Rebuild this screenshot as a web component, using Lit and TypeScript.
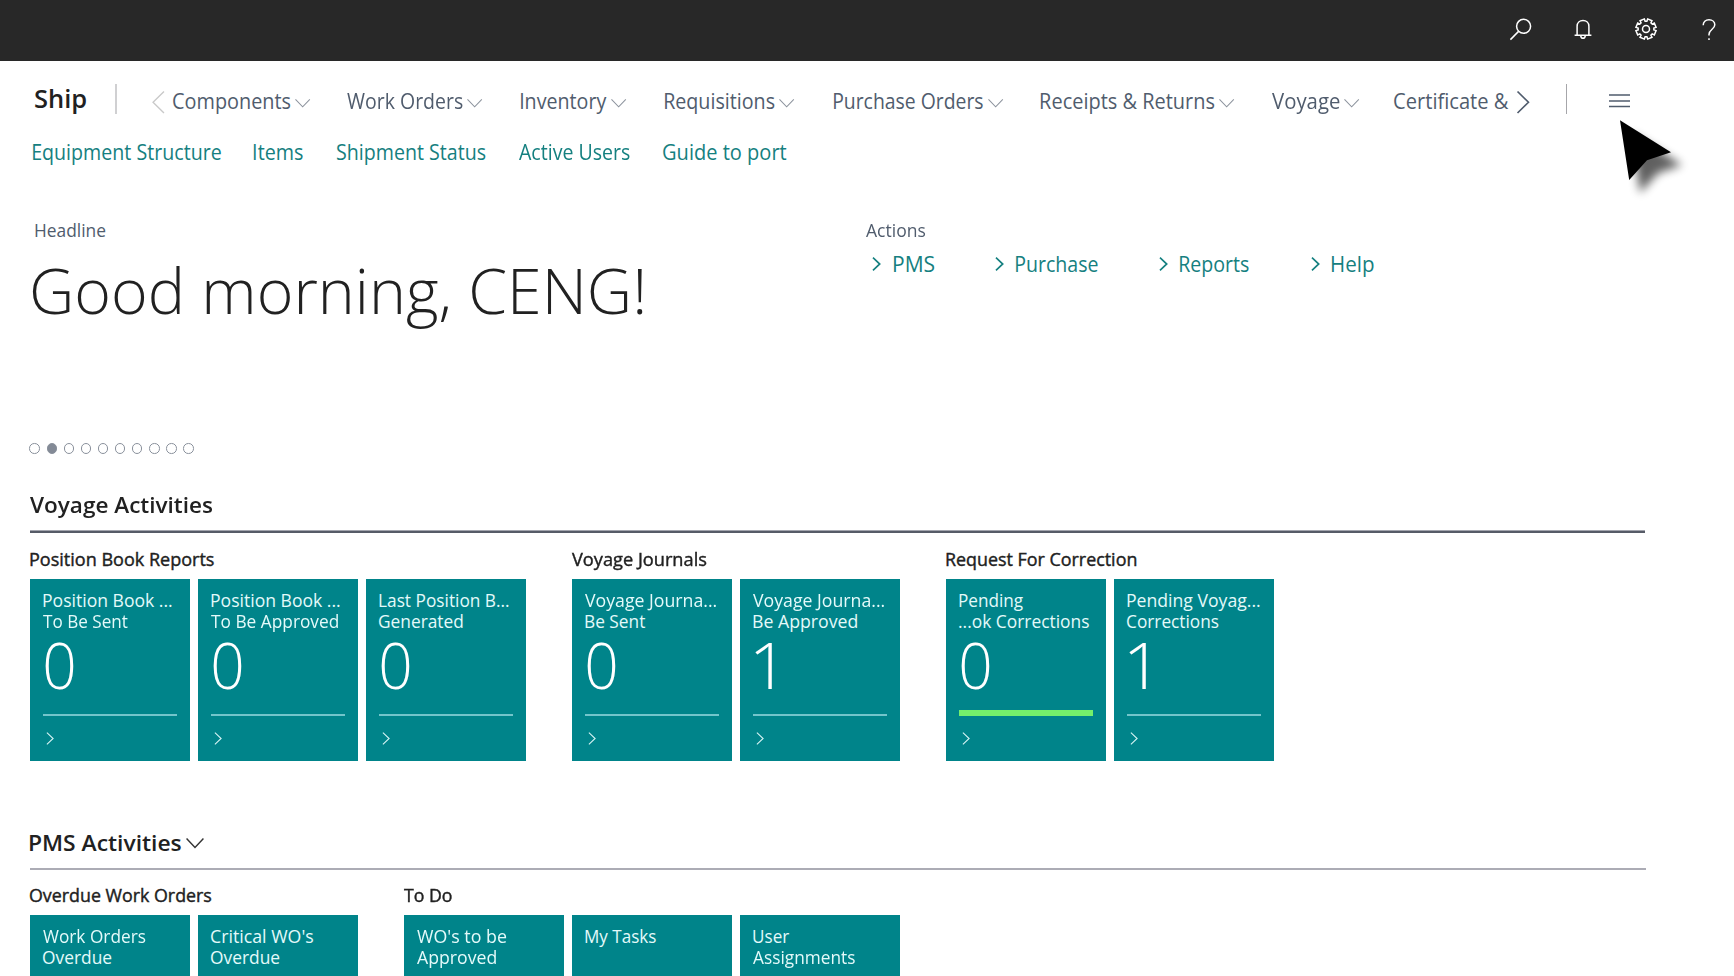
import { LitElement, html, css, svg, nothing } from "lit";
import { customElement, property, state } from "lit/decorators.js";
import { classMap } from "lit/directives/class-map.js";
import { styleMap } from "lit/directives/style-map.js";

type Line = [text: string, width: number];
interface Tile { lines: Line[]; value?: string; good?: boolean }
interface Group { title: Line; tiles: Tile[] }

/* A single line of text whose visible ink fills exactly `width` pixels. */
@customElement("ink-label")
class InkLabel extends LitElement {
  static styles = css`
    :host { display: block; flex: none; white-space: nowrap; }
    .box { display: block; }
    .ink { display: inline-block; transform-origin: 0 0; }
  `;
  @property() text = "";
  @property({ type: Number }) width = 0;
  @state() private fit = "none";

  firstUpdated() {
    const cs = getComputedStyle(this);
    const ctx = document.createElement("canvas").getContext("2d")!;
    ctx.font = `${cs.fontWeight} ${cs.fontSize} ${cs.fontFamily}`;
    const m = ctx.measureText(this.text);
    const left = -m.actualBoundingBoxLeft;
    const ink = m.actualBoundingBoxRight - left;
    this.fit = `scaleX(${this.width / ink}) translateX(${-left}px)`;
  }

  render() {
    return html`<span class="box" style=${styleMap({ width: `${this.width}px` })}
      ><span class="ink" style=${styleMap({ transform: this.fit })}>${this.text}</span></span>`;
  }
}

const label = ([text, width]: Line) => html`<ink-label .text=${text} .width=${width}></ink-label>`;

const MENU: Line[] = [
  ["Components", 118], ["Work Orders", 116.2], ["Inventory", 85.7], ["Requisitions", 110],
  ["Purchase Orders", 149.6], ["Receipts & Returns", 174], ["Voyage", 67.6], ["Certificate &", 115.1],
];
const LINKS: Line[] = [
  ["Equipment Structure", 188], ["Items", 49.4], ["Shipment Status", 149], ["Active Users", 111.4], ["Guide to port", 123.3],
];
const ACTIONS: Line[] = [["PMS", 40.6], ["Purchase", 81.7], ["Reports", 69.4], ["Help", 41.7]];

const VOYAGE: Group[] = [
  { title: ["Position Book Reports", 184], tiles: [
    { lines: [["Position Book ...", 129], ["To Be Sent", 84.6]], value: "0" },
    { lines: [["Position Book ...", 129], ["To Be Approved", 127.5]], value: "0" },
    { lines: [["Last Position B...", 130], ["Generated", 84]], value: "0" },
  ] },
  { title: ["Voyage Journals", 134.5], tiles: [
    { lines: [["Voyage Journa...", 131.6], ["Be Sent", 60]], value: "0" },
    { lines: [["Voyage Journa...", 131.6], ["Be Approved", 104.5]], value: "1" },
  ] },
  { title: ["Request For Correction", 190.5], tiles: [
    { lines: [["Pending", 64.5], ["...ok Corrections", 130]], value: "0", good: true },
    { lines: [["Pending Voyag...", 133], ["Corrections", 91.6]], value: "1" },
  ] },
];
const PMS: Group[] = [
  { title: ["Overdue Work Orders", 181.4], tiles: [
    { lines: [["Work Orders", 102.5], ["Overdue", 69.2]] },
    { lines: [["Critical WO's", 102.3], ["Overdue", 69.2]] },
  ] },
  { title: ["To Do", 47.8], tiles: [
    { lines: [["WO's to be", 90], ["Approved", 79.4]] },
    { lines: [["My Tasks", 71]] },
    { lines: [["User", 36], ["Assignments", 102]] },
  ] },
];

const chevronDown = (cls: string) => svg`<svg class=${cls} viewBox="0 0 16 9" preserveAspectRatio="none"><path d="M.5.5 8 8.3 15.5.5"/></svg>`;
const chevronRight = (cls: string) => svg`<svg class=${cls} viewBox="0 0 9 14" preserveAspectRatio="none"><path d="M1 .6 8 7 1 13.4"/></svg>`;

function gearPath(): string {
  const c = 11, pts: string[] = [];
  for (let i = 0; i < 8; i++) {
    const a = (i * Math.PI) / 4 + Math.PI / 8;
    for (const [off, r] of [[-0.28, 7.9], [-0.23, 10.2], [0.23, 10.2], [0.28, 7.9]]) {
      pts.push(`${(c + r * Math.cos(a + off)).toFixed(2)} ${(c + r * Math.sin(a + off)).toFixed(2)}`);
    }
  }
  return `M${pts.join("L")}Z`;
}

@customElement("app-root")
class AppRoot extends LitElement {
  static styles = css`
    :host {
      display: block; position: relative; width: 1734px; height: 976px; overflow: hidden;
      background: #fff; color: #212121; font-family: "Open Sans", "Noto Sans", sans-serif;
    }
    svg { display: block; flex: none; fill: none; overflow: visible; }
    .topbar { display: flex; align-items: flex-start; justify-content: flex-end; height: 61px; box-sizing: border-box;
      background: #282828; padding: 18.3px 18.3px 0 0; }
    .topbar svg { stroke: #fff; stroke-width: 1.5; height: 22px; }
    .search { width: 23px; margin-right: 42.3px; }
    .bell { width: 18px; margin-right: 43px; }
    .gear { width: 22px; margin-right: 44.4px; }
    .help { width: 14px; }

    .nav { display: flex; height: 30px; line-height: 30px; margin-top: 23px; padding-left: 35px; }
    .brand { font-size: 26px; font-weight: 600; width: 80px; line-height: 28.4px; }
    .bar { width: 2px; background: #d0d0d2; margin-right: 35.3px; }
    .bar.end { width: 1px; background: #a6a6aa; margin: 0 42.4px 0 36px; }
    .prev, .next { width: 12.5px; height: 22.5px; margin-top: 6.5px; stroke: #c9c9c9; stroke-width: 1.3; }
    .prev { margin-right: 7.8px; }
    .next { stroke: #505c6d; stroke-width: 1.6; margin-left: 7.8px; }
    .menu { display: grid; grid-template-columns: 174.3px 174.4px 143.8px 168.5px 207.4px 230.6px 122.6px 115.1px;
      font-size: 21px; color: #505c6d; padding-top: 2px; }
    .entry { display: flex; gap: 4.4px; }
    .entry-chevron { width: 15.3px; height: 8.4px; margin-top: 13.2px; stroke: #8d949e; stroke-width: 1.1; }
    .burger { width: 21px; height: 14px; margin-top: 10px; stroke: #505c6d; stroke-width: 1.5; }

    .links { display: flex; gap: 33px; margin-top: 23px; padding-left: 33.4px; height: 30px; line-height: 30px; font-size: 21px; color: #158080; }

    .hero { display: grid; grid-template-columns: 833px auto; justify-content: start; height: 322px; padding: 51px 0 0 32.6px; box-sizing: border-box; }
    .caption { font-size: 17.7px; line-height: 24px; color: #505c6d; }
    .left .caption { padding-left: 2.1px; }
    .greeting { font-size: 63.5px; line-height: 80px; font-weight: 300; margin: 7.7px 0 0 -.8px; color: #212121; }
    .dots { display: flex; gap: 6.6px; margin: 113.6px 0 0 -3.2px; }
    .dot { width: 10.5px; height: 10.5px; box-sizing: border-box; border: 1.3px solid #8a919c; border-radius: 50%; }
    .dot.on { background: #838a96; }
    .actions { display: flex; gap: 61.1px; margin: 7.2px 0 0 6.9px; line-height: 30px; font-size: 21px; color: #158080; }
    .action { display: flex; gap: 12.4px; }
    .action-chevron { width: 8.7px; height: 14px; margin-top: 8.3px; stroke: #158080; stroke-width: 1.7; }

    .section { margin-left: 29.7px; width: 1616px; }
    .section-head { display: flex; gap: 4.6px; height: 41px; box-sizing: border-box; padding-left: .7px; line-height: 30px; font-size: 22px; font-weight: 600; }
    .head-chevron { width: 18px; height: 10.2px; margin-top: 11.2px; stroke: #333; stroke-width: 1.3; }
    .rule { height: 2px; background: #acacb5; }
    .rule.strong { width: 1615px; height: 2px; background: #565b67; border-top: 1px solid #a3a5ae; }
    .groups { display: flex; gap: 45.5px; }
    .group-title { box-sizing: border-box; height: 46px; padding: 13.6px 0 0 .7px; font-size: 17.7px; line-height: 24px; -webkit-text-stroke: .4px #212121; }
    .tiles { display: flex; gap: 7.5px; }
    .tile { width: 160.5px; height: 181.5px; box-sizing: border-box; padding: 10.6px 13.2px 0 13.4px; background: #00848a; color: #e4fafa; }
    .tile-text { height: 42px; font-size: 17.7px; line-height: 21px; padding-left: .4px; }
    .value { font-size: 65px; line-height: 60px; font-weight: 300; color: #fff; margin: 2px 0 0 1.7px; height: 76px; box-sizing: border-box; }
    .status { height: 6px; display: flex; align-items: flex-end; }
    .status::after { content: ""; width: 100%; height: 2px; background: #73c5cb; }
    .status.good::after { height: 6px; background: #74f06b; }
    .tile-chevron { width: 8px; height: 13px; margin: 16.6px 0 0 3px; stroke: #d8f5f5; stroke-width: 1.2; }
    .pms { margin-top: 66.4px; }
    .pms .group-title { height: 45.6px; padding-top: 12.8px; }

    .pointer { position: absolute; left: 1612px; top: 112px; width: 90px; height: 100px; }
    .pointer-shade { fill: #000; opacity: .62; filter: blur(5px); }
    .pointer-body { fill: #000; }
  `;

  private tile(t: Tile) {
    return html`<div class="tile">
      <div class="tile-text">${t.lines.map(label)}</div>
      ${t.value === undefined ? nothing : html`
        <div class="value">${label([t.value, t.value === "1" ? 17 : 28.8])}</div>
        <div class=${classMap({ status: true, good: !!t.good })}></div>
        ${chevronRight("tile-chevron")}`}
    </div>`;
  }

  private groups(list: Group[]) {
    return html`<div class="groups">${list.map((g) => html`
      <div><div class="group-title">${label(g.title)}</div><div class="tiles">${g.tiles.map((t) => this.tile(t))}</div></div>`)}</div>`;
  }

  render() {
    return html`
      <header class="topbar">
        <svg class="search" viewBox="0 0 23 22"><circle cx="14.6" cy="8.3" r="7"/><path d="M9.6 13.4 1.4 21.6"/></svg>
        <svg class="bell" viewBox="0 0 18 22"><path d="M.6 17.3H17.4M3.1 17.3V8.2C3.1 4.7 5.7 2.4 9 2.4S14.9 4.7 14.9 8.2V17.3M6.7 17.6C6.9 19.4 7.8 20.3 9 20.3S11.1 19.4 11.3 17.6"/></svg>
        <svg class="gear" viewBox="0 0 22 22"><path d=${gearPath()}/><circle cx="11" cy="11" r="3.5"/></svg>
        <svg class="help" viewBox="0 0 14 22"><path d="M1.2 7.2C1.2 4 3.5 1.8 7 1.8S12.8 4 12.8 6.8C12.8 11.4 7 11.2 7 16.6V17.4M7 20.3V22"/></svg>
      </header>
      <nav class="nav">
        <div class="brand">${label(["Ship", 51])}</div>
        <div class="bar"></div>
        <svg class="prev" viewBox="0 0 12 22" preserveAspectRatio="none"><path d="M11.5.5 1 11 11.5 21.5"/></svg>
        <div class="menu">${MENU.map((m, i) => html`<div class="entry">${label(m)}${i < MENU.length - 1 ? chevronDown("entry-chevron") : nothing}</div>`)}</div>
        <svg class="next" viewBox="0 0 12 22" preserveAspectRatio="none"><path d="M.5.5 11 11 .5 21.5"/></svg>
        <div class="bar end"></div>
        <svg class="burger" viewBox="0 0 21 14"><path d="M0 1H21M0 6.9H21M0 12.6H21"/></svg>
      </nav>
      <div class="links">${LINKS.map(label)}</div>
      <section class="hero">
        <div class="left">
          <div class="caption">${label(["Headline", 71])}</div>
          <div class="greeting">${label(["Good morning, CENG!", 611])}</div>
          <div class="dots">${Array.from({ length: 10 }, (_, i) => html`<i class=${classMap({ dot: true, on: i === 1 })}></i>`)}</div>
        </div>
        <div>
          <div class="caption">${label(["Actions", 59.4])}</div>
          <div class="actions">${ACTIONS.map((a) => html`<div class="action">${chevronRight("action-chevron")}${label(a)}</div>`)}</div>
        </div>
      </section>
      <section class="section voyage">
        <div class="section-head">${label(["Voyage Activities", 182.3])}</div>
        <div class="rule strong"></div>
        ${this.groups(VOYAGE)}
      </section>
      <section class="section pms">
        <div class="section-head">${label(["PMS Activities", 151])}${chevronDown("head-chevron")}</div>
        <div class="rule"></div>
        ${this.groups(PMS)}
      </section>
      <svg class="pointer" viewBox="1612 112 90 100">
        <path class="pointer-shade" d="M1631 133 1682 165 1658 173 1640 193Z"/>
        <path class="pointer-body" d="M1620 120.3 1671 152.3 1647 160.3 1629.2 180Z"/>
      </svg>`;
  }
}
